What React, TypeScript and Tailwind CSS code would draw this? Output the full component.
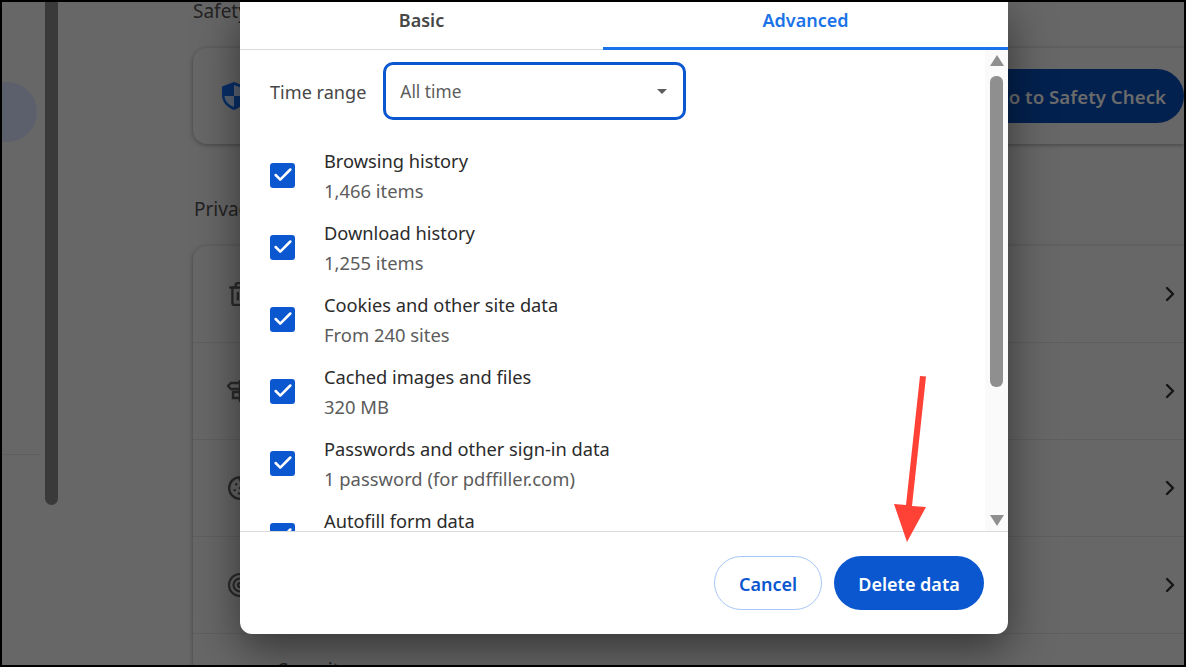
import { ChevronRight, Check, Cookie, Trash2 } from "lucide-react";

const items = [
  { title: "Browsing history", note: "1,466 items" },
  { title: "Download history", note: "1,255 items" },
  { title: "Cookies and other site data", note: "From 240 sites" },
  { title: "Cached images and files", note: "320 MB" },
  { title: "Passwords and other sign-in data", note: "1 password (for pdffiller.com)" },
  { title: "Autofill form data", note: "\u00a0" },
];

function TargetIcon() {
  return (
    <svg width="26" height="26" viewBox="0 0 26 26" fill="none" stroke="#2b2b2b" strokeWidth="2.2">
      <circle cx="13" cy="13" r="11" />
      <circle cx="13" cy="13" r="6.5" />
      <circle cx="13" cy="13" r="2" />
    </svg>
  );
}

function SignIcon() {
  return (
    <svg width="26" height="26" viewBox="0 0 26 26" fill="none" stroke="#2b2b2b" strokeWidth="2.4">
      <path d="M13 2 V24" />
      <path d="M4 5 H20 V11 H4 L1 8 Z" />
      <path d="M6 14 H23 L25 17 L23 20 H6 Z" />
    </svg>
  );
}

function PrivacyRow({ icon }: { icon: React.ReactNode }) {
  return (
    <div className="flex h-[97px] items-center justify-between border-b border-[#5f5f5f] pl-[34px] pr-[2px]">
      <div className="text-[#2b2b2b]">{icon}</div>
      <ChevronRight className="h-[24px] w-[24px] text-[#161616]" strokeWidth={2.4} />
    </div>
  );
}

export default function App() {
  return (
    <div className="relative h-[667px] w-[1186px] overflow-hidden bg-black p-[2px] font-['Noto_Sans',sans-serif]">
      {/* dimmed settings page */}
      <div className="flex h-[663px] w-[1182px] overflow-hidden bg-[#676767]">
        <div className="relative w-[43px] shrink-0">
          <div className="ml-[-25px] mt-[80px] h-[60px] w-[60px] rounded-full bg-[#5b606c]" />
          <div className="mt-[312px] h-px w-[38px] bg-[#5f5f5f]" />
        </div>
        <div className="h-[503px] w-[13px] shrink-0 rounded-b-[7px] bg-[#3a3a3a]" />
        <div className="ml-[135px] flex-1">
          <p className="mt-[-5px] text-[19px] leading-[28px] text-[#232323]">Safety check</p>
          <div className="mt-[23px] flex h-[96px] items-center justify-between rounded-l-[14px] pl-[28px] shadow-[0_1px_4px_rgba(0,0,0,0.35)]">
            <svg width="26" height="30" viewBox="0 0 26 30">
              <path d="M13 1 L25 5.5 V14 C25 21 20 26.5 13 29 C6 26.5 1 21 1 14 V5.5 Z" fill="#08306b" />
              <path d="M13 4 L22.5 7.5 V15 H13 Z M13 15 V26 C8 24 3.500 20 3.500 15 Z" fill="#5b6675" />
            </svg>
            <div className="flex h-[54px] items-center rounded-full bg-[#03214f] pl-[40px] pr-[18px] pt-[2px] text-[18.700px] font-semibold text-[#6b6b6b]">
              Go to Safety Check
            </div>
          </div>
          <p className="mt-[51px] pl-[1px] text-[19px] leading-[28px] text-[#232323]">Privacy and security</p>
          <div className="mt-[23px] rounded-tl-[14px] shadow-[0_1px_4px_rgba(0,0,0,0.35)]">
            <PrivacyRow icon={<Trash2 className="h-[26px] w-[26px]" strokeWidth={2.2} />} />
            <PrivacyRow icon={<SignIcon />} />
            <PrivacyRow icon={<Cookie className="h-[26px] w-[26px]" strokeWidth={2.2} />} />
            <PrivacyRow icon={<TargetIcon />} />
            <p className="pl-[85px] pt-[22px] text-[19px] leading-[28px] text-[#232323]">Security</p>
          </div>
        </div>
      </div>

      {/* dialog */}
      <div className="absolute left-[240px] top-[2px] flex h-[632px] w-[768px] flex-col rounded-b-[12px] bg-white shadow-[0_14px_44px_rgba(0,0,0,0.5)]">
        <div className="flex h-[48px] shrink-0 border-b border-[#dadada] text-[18px] font-semibold">
          <div className="flex w-[363px] items-center justify-center pb-[10px] text-[#474747]">Basic</div>
          <div className="flex h-[48px] flex-1 items-center justify-center border-b-[3px] border-[#1a73e8] pb-[8px] text-[#1a73e8]">Advanced</div>
        </div>

        <div className="flex min-h-0 flex-1 overflow-hidden">
          <div className="flex-1 overflow-hidden pl-[30px]">
            <div className="mt-[12px] flex items-center gap-[17px]">
              <span className="pt-[3px] text-[18.100px] text-[#474747]">Time range</span>
              <div className="flex h-[58px] w-[303px] items-center justify-between rounded-[10px] border-[3px] border-[#0b57d0] pl-[14px] pr-[16px] text-[17.300px] text-[#5c5c5c]">
                <span className="pt-[2px]">All time</span>
                <div className="h-0 w-0 border-x-[5.500px] border-t-[5px] border-x-transparent border-t-[#5c5c5c]" />
              </div>
            </div>
            <div className="mt-[25px] flex flex-col gap-[12px]">
              {items.map((item) => (
                <div key={item.title} className="flex h-[60px] items-center gap-[29px]">
                  <div className="flex h-[25px] w-[25px] shrink-0 items-center justify-center rounded-[3px] bg-[#0b57d0]">
                    <Check className="h-[22px] w-[22px] text-white" strokeWidth={2.800} />
                  </div>
                  <div className="mt-[2px] text-[18.250px] leading-[30px]">
                    <div className="text-[#2b2b2b]">{item.title}</div>
                    <div className="text-[18.400px] text-[#5c5c5c]">{item.note}</div>
                  </div>
                </div>
              ))}
            </div>
          </div>
          <div className="flex w-[23px] shrink-0 flex-col items-center justify-between bg-[#fafafa] pb-[5px] pt-[5px]">
            <div className="flex w-full flex-1 flex-col items-center">
              <div className="h-0 w-0 border-x-[7px] border-b-[11px] border-x-transparent border-b-[#8f8f8f]" />
              <div className="mt-[10px] h-[311px] w-[13px] rounded-[6px] bg-[#8f8f8f]" />
            </div>
            <div className="h-0 w-0 border-x-[7px] border-t-[11px] border-x-transparent border-t-[#8f8f8f]" />
          </div>
        </div>

        <div className="flex h-[103px] shrink-0 items-start justify-end gap-[12px] border-t border-[#dadada] pr-[24px] pt-[24px]">
          <div className="flex h-[54px] w-[108px] items-center justify-center rounded-full border border-[#a8c7fa] pt-[2px] text-[18px] font-semibold text-[#0b57d0]">
            Cancel
          </div>
          <div className="flex h-[54px] w-[150px] items-center justify-center rounded-full bg-[#0b57d0] pt-[2px] text-[18px] font-semibold text-white">
            Delete data
          </div>
        </div>
      </div>

      {/* annotation arrow */}
      <svg className="absolute left-[880px] top-[370px]" width="60" height="180" viewBox="880 370 60 180">
        <path d="M920 376 L926 376.500 L912 506 L926 507 L907 542 L894 504 L906 505 Z" fill="#ff4136" />
      </svg>
    </div>
  );
}
